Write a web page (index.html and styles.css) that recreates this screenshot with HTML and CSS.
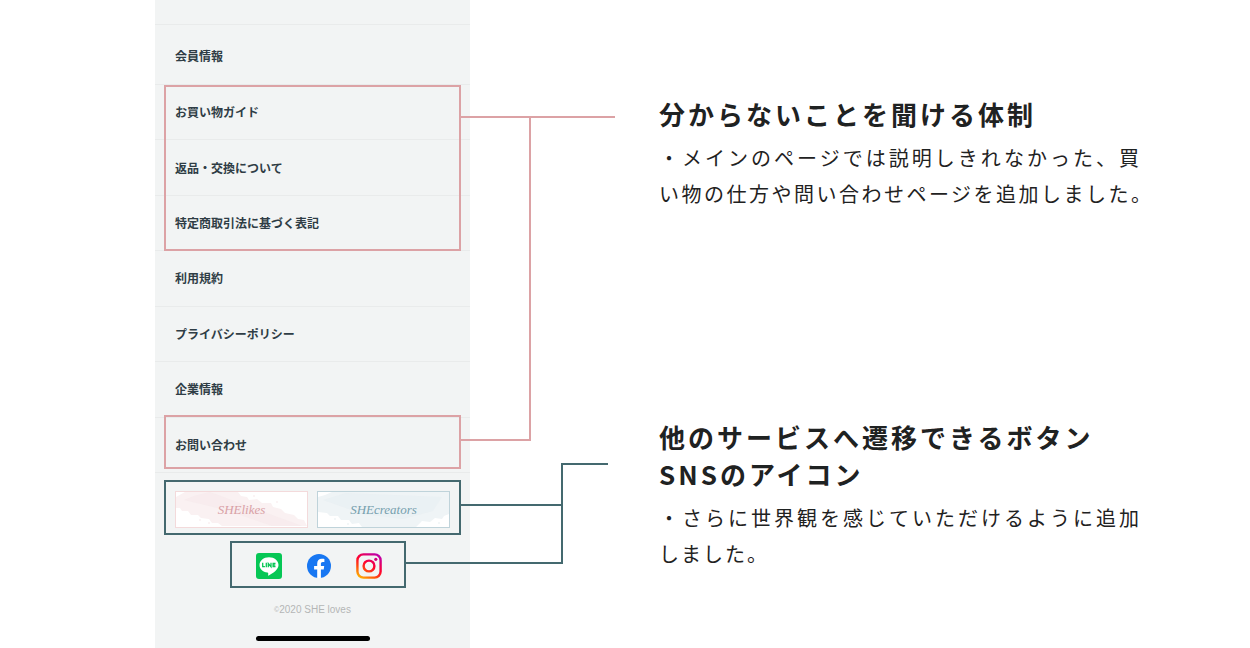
FILE: index.html
```html
<!DOCTYPE html>
<html lang="ja">
<head>
  <meta charset="UTF-8" />
  <meta name="viewport" content="width=device-width, initial-scale=1.0" />
  <title>SHE loves</title>
  <link rel="stylesheet" href="styles.css">
</head>
<body>
  <main class="slide">
    <div class="phone">
      <nav class="menu">
        <ul class="menu-list">
          <li><a href="#">会員情報</a></li>
          <li><a href="#">お買い物ガイド</a></li>
          <li><a href="#">返品・交換について</a></li>
          <li><a href="#">特定商取引法に基づく表記</a></li>
          <li><a href="#">利用規約</a></li>
          <li><a href="#">プライバシーポリシー</a></li>
          <li><a href="#">企業情報</a></li>
          <li><a href="#">お問い合わせ</a></li>
        </ul>
      </nav>
      <div class="banners">
        <a class="banner banner-likes" href="#">
          <svg class="brush" viewBox="0 0 131 35" preserveAspectRatio="none" aria-hidden="true">
            <path fill="#faf1f2" d="M0 5 9 0H62l3 4 6 1 2 3 8-1 5 4 9 0 2 4 8 2 4 4 9 2 4 4 6 1 3 6H46l-4-3-6 0-3-4-8-1-3-3-7 0-3-4-6 0-2-3-4 0z"/>
            <path fill="#f5e8e9" opacity=".5" d="M18 4 34 0l92 34H96L50 18 8 8z"/>
            <g fill="#faf1f2"><circle cx="78" cy="4" r="1"/><circle cx="101" cy="10" r="1"/><circle cx="24" cy="28" r="1"/><circle cx="33" cy="31" r="1"/></g>
          </svg>
          <span>SHElikes</span>
        </a>
        <a class="banner banner-creators" href="#">
          <svg class="brush" viewBox="0 0 131 35" preserveAspectRatio="none" aria-hidden="true">
            <path fill="#eff4f6" d="M0 5 7 3 14 0H131V22l-5 2-2 3-7-1-5 4-8-1-6 6H44l-3-4-7 1-3-4-8 0-3-4-8 0-3-3-9-1z"/>
            <path fill="#e6edf1" opacity=".5" d="M5 8 28 1l96 4-9 14-30 8-40-5z"/>
            <g fill="#eff4f6"><circle cx="17" cy="27" r="1"/><circle cx="30" cy="32" r="1"/><circle cx="121" cy="31" r="1"/></g>
          </svg>
          <span>SHEcreators</span>
        </a>
      </div>
      <div class="sns">
        <a href="#" aria-label="LINE">
          <svg width="26" height="26" viewBox="0 0 26 26">
            <rect width="26" height="26" rx="3" fill="#06c755"/>
            <path fill="#fff" d="M13 4.200c-5.400 0-9.500 3.500-9.500 7.800 0 3.900 3.300 7 7.900 7.600 1 .2 1 .7.700 2.500-.1.600.2.700.7.400 4-2.200 9.700-5.900 9.700-10.500 0-4.300-4.100-7.800-9.500-7.800z"/>
            <path fill="none" stroke="#06c755" stroke-width="1.300" d="M6.700 9.700v4h2.200M10.300 9.700v4.600M12.300 14.300V10.600l2.700 3.100V9.700M19.500 10.300h-2.400v3.400h2.400M17.100 12h2.200"/>
          </svg>
        </a>
        <a href="#" aria-label="Facebook">
          <svg width="24" height="24" viewBox="0 0 24 24">
            <circle cx="12" cy="12" r="12" fill="#1877f2"/>
            <path fill="#fff" d="M16.700 15.500l.5-3.500h-3.300V9.800c0-1 .5-1.900 2-1.900h1.500v-3s-1.400-.2-2.700-.2c-2.700 0-4.500 1.700-4.500 4.700V12H7.100v3.500h3.100v8.400c1.200.2 2.500.2 3.700 0v-8.400z"/>
          </svg>
        </a>
        <a href="#" aria-label="Instagram">
          <svg width="26" height="26" viewBox="0 0 26 26">
            <defs>
              <linearGradient id="insta" gradientUnits="userSpaceOnUse" x1="5" y1="26" x2="21" y2="0">
                <stop offset="0" stop-color="#ffb600"/>
                <stop offset=".3" stop-color="#ff4a0f"/>
                <stop offset=".55" stop-color="#ff0030"/>
                <stop offset="1" stop-color="#b900b4"/>
              </linearGradient>
            </defs>
            <g fill="none" stroke="url(#insta)" stroke-width="2.400">
              <rect x="1.400" y="1.400" width="23.200" height="23.200" rx="6"/>
              <circle cx="13" cy="13" r="5.400"/>
            </g>
            <circle cx="19.800" cy="6.300" r="1.600" fill="#d1007c"/>
          </svg>
        </a>
      </div>
      <p class="copyright"><small>©</small>2020 SHE loves</p>
      <div class="home-bar"></div>
    </div>

    <div class="notes">
      <section class="note">
        <h2>分からないことを聞ける体制</h2>
        <p><span class="line">・メインのページでは説明しきれなかった、買</span><span class="line hang">い物の仕方や問い合わせページを追加しました。</span></p>
      </section>
      <section class="note">
        <h2>他のサービスへ遷移できるボタン<br>SNSのアイコン</h2>
        <p><span class="line">・さらに世界観を感じていただけるように追加</span>しました。</p>
      </section>
    </div>

    <!-- frames and connector lines -->
    <svg class="callouts" width="640" height="648" viewBox="0 0 640 648" aria-hidden="true">
      <g class="line-pink">
        <rect x="165" y="86" width="295" height="164"/>
        <rect x="165" y="416" width="295" height="52"/>
        <path d="M461 117H615M530 118V440H461"/>
      </g>
      <g class="line-teal">
        <rect x="165" y="481" width="295" height="53"/>
        <rect x="231" y="542" width="174" height="45"/>
        <path d="M461 505H562M406 563H562V464H608"/>
      </g>
    </svg>
  </main>
</body>
</html>
```

FILE: styles.css
```css
*{margin:0;padding:0;box-sizing:border-box}
body{font-family:"Noto Sans CJK JP",sans-serif;background:#fff;color:#1f2222}
a{color:inherit;text-decoration:none}

.slide{position:relative;min-height:100vh;display:grid;grid-template-columns:315px 1fr;column-gap:189px;padding-left:155px;overflow:hidden}

/* phone */
.phone{background:#f2f4f4;display:flex;flex-direction:column}
.menu{padding-top:24px}
.menu-list{list-style:none;display:grid;grid-template-rows:60px;grid-auto-rows:1fr;height:449px;border-bottom:1px solid #e9ebeb}
.menu-list li{display:grid;border-top:1px solid #e9ebeb}
.menu-list li:first-child{padding-top:2px}
.menu-list a{display:flex;align-items:center;padding:0 20px;font-size:12px;line-height:18px;font-weight:700;color:#2f3d45}

.banners{display:grid;grid-template-columns:1fr 1fr;gap:9px;padding:18px 20px 0}
.banner{position:relative;display:flex;align-items:center;justify-content:center;height:37px;background:#fff;border:1px solid;font-family:"Liberation Serif",serif;font-style:italic;font-size:13px;line-height:16px}
.banner span{position:relative}
.banner-likes{border-color:#f3dadb;color:#f3dadb}
.banner-likes span{color:#d9a0a5}
.banner-creators{border-color:#bfd3da}
.banner-creators span{color:#76a0ae}
.brush{position:absolute;inset:0;width:100%;height:100%}

.sns{display:flex;align-items:center;justify-content:center;gap:25px;padding:25px 0 23px 12px}
.sns a,.sns svg{display:block}

.copyright{font-family:"Liberation Sans",sans-serif;font-size:10px;line-height:16px;text-align:center;color:#b4b6b6}
.copyright small{font-size:7px;vertical-align:1px}
.home-bar{width:114px;height:5px;margin:auto auto 7px;border-radius:3px;background:#000}

/* explanations */
.notes{display:flex;flex-direction:column;gap:206px;padding:95px 40px 40px 0}
.note h2{font-size:26px;line-height:37px;font-weight:700;letter-spacing:3px;margin-bottom:8px}
.note p{max-width:482px;font-size:20px;line-height:36px;letter-spacing:2px}
.line{display:block;text-align-last:justify}
/* the closing full stop hangs past the column edge */
.hang{margin-right:-12px}

.callouts{position:absolute;top:0;left:0;fill:none;stroke-width:2;pointer-events:none}
.line-pink{stroke:#dca2a5}
.line-teal{stroke:#44696f}
```
